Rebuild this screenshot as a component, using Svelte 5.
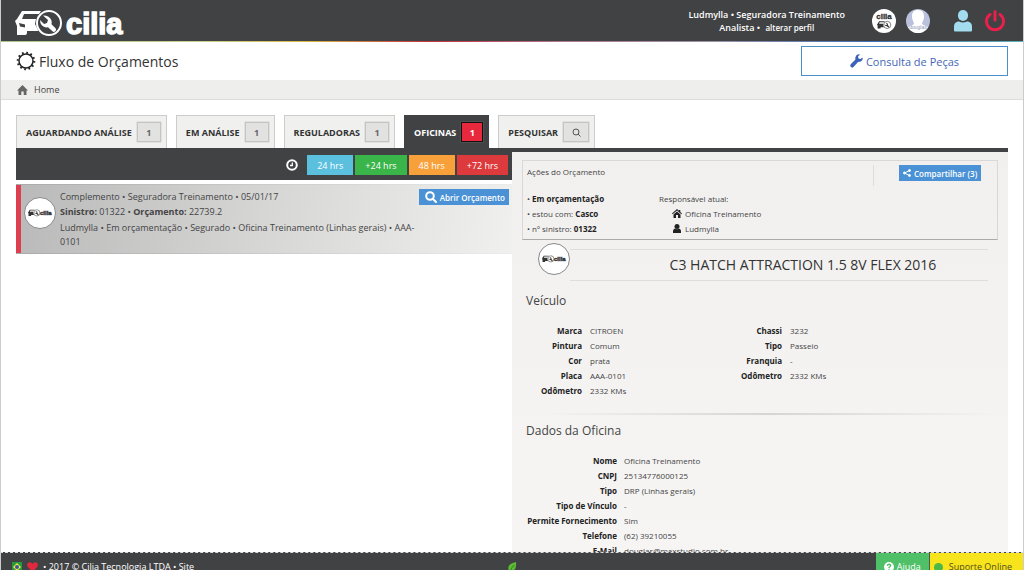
<script lang="ts">
	interface Tab {
		label: string;
		count?: number;
	}

	const tabs: Tab[] = [
		{ label: 'Aguardando análise', count: 1 },
		{ label: 'Em análise', count: 1 },
		{ label: 'Reguladoras', count: 1 },
		{ label: 'Oficinas', count: 1 },
		{ label: 'Pesquisar' }
	];

	const periods = [
		{ label: '24 hrs', tone: 'blue' },
		{ label: '+24 hrs', tone: 'green' },
		{ label: '48 hrs', tone: 'orange' },
		{ label: '+72 hrs', tone: 'red' }
	];

	const vehicleLeft = [
		['Marca', 'CITROEN'],
		['Pintura', 'Comum'],
		['Cor', 'prata'],
		['Placa', 'AAA-0101'],
		['Odômetro', '2332 KMs']
	];

	const vehicleRight = [
		['Chassi', '3232'],
		['Tipo', 'Passeio'],
		['Franquia', '-'],
		['Odômetro', '2332 KMs']
	];

	const workshop = [
		['Nome', 'Oficina Treinamento'],
		['CNPJ', '25134776000125'],
		['Tipo', 'DRP (Linhas gerais)'],
		['Tipo de Vínculo', '-'],
		['Permite Fornecimento', 'Sim'],
		['Telefone', '(62) 39210055'],
		['E-Mail', 'douglas@maxstudio.com.br']
	];

	let active = $state(3);
</script>

{#snippet carMark()}
	<path d="M2 9 7 1h19l-2 3H9L7 9h14l-1 5 3 6v1h-11v2q0 2-2 2H2V16L0 11z" />
	<path class="cut" d="M4 13l6 1.500v3l-5-1z" />
	<circle class="ring" cx="34" cy="13" r="12" />
	<path d="M28 5.500l5 4.500-1 3-3 1-4-4q0 6 6 7.500l2-.2 5 4.500q2 .5 3-1.500.3-1-.5-2l-4-4q1-5-3-7.500-2.500-1.500-5.500-1.300z" />
{/snippet}

{#snippet seal()}
	<svg class="seal" viewBox="0 0 32 32" aria-hidden="true">
		<circle cx="16" cy="16" r="15.5" />
		<g class="mark" transform="translate(4 12.500) scale(0.26)">{@render carMark()}</g>
		<text x="16" y="18">cilia</text>
	</svg>
{/snippet}

{#snippet details(rows: string[][])}
	<dl>
		{#each rows as [term, value]}
			<dt>{term}</dt>
			<dd>{value}</dd>
		{/each}
	</dl>
{/snippet}

<div class="page">
	<header class="topbar">
		<a class="brand" href="#home" aria-label="cilia">
			<svg width="114" height="32" viewBox="0 0 114 32">
				<g class="mark" transform="translate(0 3)">{@render carMark()}</g>
				<text x="51" y="27">cilia</text>
			</svg>
		</a>
		<div class="account">
			<p class="user">
				Ludmylla • Seguradora Treinamento<br />
				Analista • <a href="#perfil">alterar perfil</a>
			</p>
			<a href="#empresa" aria-label="cilia">
				<svg width="24" height="24" viewBox="0 0 24 24">
					<circle cx="12" cy="12" r="12" fill="#fff" />
					<text class="tiny-brand" x="12" y="10">cilia</text>
					<g class="mark dark" transform="translate(5 12) scale(0.3)">{@render carMark()}</g>
				</svg>
			</a>
			<a href="#foto" aria-label="Foto">
				<svg width="24" height="24" viewBox="0 0 24 24">
					<circle cx="12" cy="12" r="12" fill="#b9c1dc" />
					<path d="M12 1c5 0 6 3 6 7 0 3-2 5-2 7 1 1 4 2 6 3-4 8-16 8-20 0 2-1 5-2 6-3 0-2-2-4-2-7 0-4 1-7 6-7z" fill="#fff" />
					<text class="tiny-name" x="12" y="20">douglas</text>
				</svg>
			</a>
			<a class="profile" href="#conta" aria-label="Conta">
				<svg width="18" height="22" viewBox="0 0 18 22" fill="#a3dcee">
					<rect x="4" y="0" width="10" height="11" rx="5" />
					<path d="M1 21.500q-1 0-1-1v-4q0-4 4-5h1q4 2 8 0h1q4 1 4 5v4q0 1-1 1z" />
				</svg>
			</a>
			<a href="#sair" aria-label="Sair">
				<svg width="20" height="22" viewBox="0 0 20 22" fill="none" stroke="#ea1f4c" stroke-width="3" stroke-linecap="round">
					<path d="M5 4.500a8.500 8.500 0 1 0 10 0M10 1.500v8.500" />
				</svg>
			</a>
		</div>
	</header>
	<div class="rainbow"></div>

	<div class="titlebar">
		<svg width="20" height="20" viewBox="0 0 20 20" fill="none" stroke="#222">
			<circle cx="10" cy="10" r="7" stroke-width="1.500" />
			<circle cx="10" cy="10" r="8.300" stroke-width="2" stroke-dasharray="1.700 2.646" />
		</svg>
		<h1>Fluxo de Orçamentos</h1>
		<button class="parts" type="button">
			<svg width="13" height="14" viewBox="0 0 13 14" fill="#3c62b5">
				<path d="M12.500 3.500 10.500 5 8.500 4.500 8 2.500 10 .5Q6.500-.5 5.500 3 5 4.500 5.500 5.500L.7 10.300Q-.3 12 1 13t2.500 0L8 8q4 0 4.700-3z" />
			</svg>
			Consulta de Peças
		</button>
	</div>

	<nav class="breadcrumb">
		<a href="#home">
			<svg width="11" height="10" viewBox="0 0 11 10" fill="#666">
				<path d="M5.500 0 11 5.500H9.500V10H6.700V6.500H4.300V10H1.500V5.500H0z" />
			</svg>
			Home
		</a>
	</nav>

	<main>
		<div class="tabs" role="tablist">
			{#each tabs as tab, i}
				<button type="button" role="tab" aria-selected={active === i} class:active={active === i} onclick={() => (active = i)}>
					{tab.label}
					<span class="badge" class:search={!tab.count}>
						{#if tab.count}
							{tab.count}
						{:else}
							<svg width="9" height="9" viewBox="0 0 9 9" fill="none" stroke="#555">
								<circle cx="4" cy="4" r="3" />
								<path d="M6 6l2.500 2.500" />
							</svg>
						{/if}
					</span>
				</button>
			{/each}
		</div>

		<div class="columns">
			<section>
				<div class="periods">
					<svg width="12" height="12" viewBox="0 0 12 12" fill="none" stroke="#fff">
						<circle cx="6" cy="6" r="4.800" stroke-width="2" />
						<path d="M6.300 3.500v3H4" stroke-width="1.300" />
					</svg>
					{#each periods as period}
						<button type="button" class={period.tone}>{period.label}</button>
					{/each}
				</div>

				<article class="budget">
					{@render seal()}
					<div class="summary">
						<p>Complemento • Seguradora Treinamento • 05/01/17</p>
						<p><b>Sinistro:</b> 01322 • <b>Orçamento:</b> 22739.2</p>
						<p class="trail">Ludmylla • Em orçamentação • Segurado • Oficina Treinamento (Linhas gerais) • AAA-<wbr />0101</p>
					</div>
					<button class="action" type="button">
						<svg width="12" height="12" viewBox="0 0 12 12" fill="none" stroke="#fff" stroke-width="2">
							<circle cx="5" cy="5" r="3.800" />
							<path d="M8 8l3 3" stroke-linecap="round" />
						</svg>
						Abrir Orçamento
					</button>
				</article>
			</section>

			<section class="panel">
				<div class="actions">
					<div class="actions-head">
						<h2>Ações do Orçamento</h2>
						<div class="share">
							<button class="action" type="button">
								<svg width="8" height="8" viewBox="0 0 8 8" fill="#fff" stroke="#fff">
									<path d="M6.500 1.500 1.500 4l5 2.500" fill="none" />
									<circle cx="6.500" cy="1.500" r="1" />
									<circle cx="1.500" cy="4" r="1" />
									<circle cx="6.500" cy="6.500" r="1" />
								</svg>
								Compartilhar (3)
							</button>
						</div>
					</div>
					<div class="actions-body">
						<ul>
							<li>• <b>Em orçamentação</b></li>
							<li>• estou com: <b>Casco</b></li>
							<li>• nº sinistro: <b>01322</b></li>
						</ul>
						<ul>
							<li>Responsável atual:</li>
							<li class="owner">
								<svg width="10" height="9" viewBox="0 0 10 9" fill="#222">
									<path d="M5 0l2 1.800V1h1.300v2L10 4.500l-.6.700L5 1.600.6 5.200 0 4.500zM5 2.500l3.500 3V9H6V6H4v3H1.500V5.500z" />
								</svg>
								Oficina Treinamento
							</li>
							<li class="owner">
								<svg width="10" height="9" viewBox="0 0 10 9" fill="#222">
									<circle cx="5" cy="2.500" r="2.500" />
									<path d="M1 9V7q0-2 2-2.500 2 1.500 4 0 2 .5 2 2.500v2z" />
								</svg>
								Ludmylla
							</li>
						</ul>
					</div>
				</div>

				<div class="model">
					{@render seal()}
					<h2>C3 HATCH ATTRACTION 1.5 8V FLEX 2016</h2>
				</div>

				<h3>Veículo</h3>
				<div class="vehicle">
					{@render details(vehicleLeft)}
					{@render details(vehicleRight)}
				</div>
				<hr />
				<h3>Dados da Oficina</h3>
				<div class="workshop">
					{@render details(workshop)}
				</div>
			</section>
		</div>
	</main>

	<footer>
		<div class="legal">
			<svg width="10" height="10" viewBox="0 0 10 10">
				<rect width="10" height="10" fill="#259b3b" />
				<path d="M5 1l4 4-4 4-4-4z" fill="#f4e04a" />
				<circle cx="5" cy="5" r="2" fill="#3659a5" />
			</svg>
			<svg width="11" height="10" viewBox="0 0 11 10" fill="#e0293f">
				<path d="M5.500 10 .8 5Q-.8 2 1.500.6 4-.5 5.500 2 7-.5 9.500.6q2.300 1.400.7 4.400z" />
			</svg>
			<span>• 2017 © Cilia Tecnologia LTDA • <a href="#site">Site</a></span>
		</div>
		<svg class="leaf" width="10" height="12" viewBox="0 0 10 12">
			<path d="M9 0q1 9-6 10l-1 2-1-1 1-2Q-1 2 9 0z" fill="#5cba33" />
			<path d="M7 3 2 10" stroke="#2f8a20" fill="none" />
		</svg>
		<div class="support">
			<a class="help" href="#ajuda">
				<svg width="10" height="10" viewBox="0 0 11 11" fill="none">
					<circle cx="5.500" cy="5.500" r="5.500" fill="#fff" />
					<path d="M3.700 4.200q.2-1.700 1.900-1.700 1.700.1 1.700 1.500 0 .8-1.700 1.800V7M5.500 8v1.500" stroke="#4fbf68" stroke-width="1.500" />
				</svg>
				Ajuda
			</a>
			<a class="online" href="#suporte"><i></i>Suporte Online</a>
		</div>
	</footer>
</div>

<style>
	:global(body) {
		margin: 0;
	}

	.page {
		height: 100vh;
		box-sizing: border-box;
		display: flex;
		flex-direction: column;
		overflow: hidden;
		background: #fff;
		color: #444;
		font-family: 'Open Sans', sans-serif;
		font-size: 9px;
		border: solid #ccc;
		border-width: 0 1px;
	}

	h1,
	h2,
	h3,
	p,
	ul,
	dl,
	dd {
		margin: 0;
		padding: 0;
		font-weight: 400;
		list-style: none;
	}

	a {
		color: inherit;
		text-decoration: none;
	}

	button {
		font: inherit;
		border: 0;
		padding: 0;
		cursor: pointer;
	}

	svg {
		display: block;
		flex-shrink: 0;
	}

	.mark {
		fill: #fff;
	}

	.mark :global(.cut) {
		fill: #414244;
	}

	.mark :global(.ring) {
		fill: #414244;
		stroke: #fff;
		stroke-width: 2;
	}

	.topbar {
		display: flex;
		align-items: center;
		justify-content: space-between;
		height: 41px;
		flex-shrink: 0;
		margin: 0 -1px;
		padding: 0 19px 0 15px;
		background: #414244;
		color: #fff;
	}

	.rainbow {
		height: 1px;
		flex-shrink: 0;
		background: linear-gradient(90deg, #a9c48a, #c9cf8a 20%, #d8b84a 30%, #c8303c 42%, #b07a90 55%, #9a94a8 70%, #3f6fb5 85%, #5fb0b5);
	}

	.brand {
		margin-top: 4px;
	}

	.brand text {
		fill: #fff;
		stroke: #fff;
		stroke-width: 1.5;
		font: 700 29px 'Liberation Sans', sans-serif;
	}

	.account {
		display: flex;
		align-items: center;
		gap: 10px;
	}

	.user {
		margin-right: 17px;
		text-align: center;
		line-height: 13px;
		font-weight: 600;
	}

	.user a {
		font-size: 8px;
	}

	.profile {
		margin-left: 14px;
	}

	.account a:last-child {
		margin-left: 3px;
	}

	.tiny-brand {
		fill: #333;
		stroke: #333;
		stroke-width: 0.3;
		font: 700 8px 'Liberation Sans', sans-serif;
		text-anchor: middle;
	}

	.tiny-name {
		fill: #8b95b5;
		font: 5px 'Liberation Sans', sans-serif;
		text-anchor: middle;
	}

	.mark.dark,
	.seal .mark {
		fill: #333;
	}

	.mark.dark :global(.ring),
	.seal .mark :global(.ring) {
		fill: #fff;
		stroke: #333;
	}

	.titlebar {
		display: flex;
		align-items: center;
		gap: 3px;
		height: 38px;
		flex-shrink: 0;
		padding: 0 15px;
	}

	.titlebar h1 {
		flex: 1;
		font-size: 14px;
		color: #333;
	}

	.parts {
		display: flex;
		align-items: center;
		justify-content: center;
		gap: 3px;
		width: 207px;
		height: 30px;
		background: #fff;
		border: 1px solid #4a8fc7;
		color: #4467b5;
		font-size: 11px;
	}

	.breadcrumb {
		display: flex;
		align-items: center;
		height: 19px;
		flex-shrink: 0;
		padding: 0 16px;
		background: #eeeeec;
		border-bottom: 1px solid #ddd;
	}

	.breadcrumb a {
		display: flex;
		align-items: center;
		gap: 6px;
	}

	main {
		flex: 1;
		min-height: 0;
		display: flex;
		flex-direction: column;
		padding: 15px 15px 0;
		overflow: hidden;
	}

	.tabs {
		display: flex;
		gap: 9px;
		border-bottom: 4px solid #414244;
	}

	.tabs button {
		display: flex;
		align-items: center;
		gap: 5px;
		height: 33px;
		box-sizing: border-box;
		padding: 0 5px 0 9px;
		background: #f0f0ee;
		border: 1px solid #ccc;
		border-bottom: 0;
		color: #333;
		font-weight: 700;
		text-transform: uppercase;
	}

	.badge {
		display: flex;
		align-items: center;
		justify-content: center;
		width: 22px;
		height: 18px;
		background: #e2e2e1;
		border: 1px solid #c4c4c4;
		box-shadow: 0 0 1px #999;
		color: #666;
	}

	.badge.search {
		width: 24px;
	}

	.tabs .active {
		background: #414244;
		border-color: #414244;
		color: #fff;
	}

	.active .badge {
		width: 20px;
		background: #e8283d;
		border-color: #111;
		color: #fff;
	}

	.columns {
		flex: 1;
		min-height: 0;
		display: grid;
		grid-template-columns: 1fr 1fr;
	}

	.periods {
		display: flex;
		align-items: center;
		justify-content: flex-end;
		gap: 2px;
		height: 26px;
		padding: 0 4px 2px 0;
		background: #414244;
		color: #fff;
	}

	.periods svg {
		margin-right: 7px;
	}

	.periods button {
		height: 20px;
		padding: 0 10px;
		color: #fff;
	}

	.blue {
		background: #5bc0de;
	}

	.green {
		background: #39b54a;
	}

	.orange {
		background: #f8a13a;
	}

	.red {
		background: #dc3a3c;
	}

	.budget {
		display: flex;
		align-items: flex-start;
		margin-top: 4px;
		padding: 4px 3px;
		background: linear-gradient(100deg, #b9b9b9, #d6d6d5 50%, #f0f0ef);
		border: solid #bbb;
		border-width: 1px 0;
		border-image: linear-gradient(90deg, #aaa, #ececec) 1;
		box-shadow: inset 5px 0 #dd3e50;
	}

	.seal {
		width: 32px;
		height: 32px;
	}

	.seal circle {
		fill: #fff;
		stroke: #888;
	}

	.seal text {
		fill: #333;
		stroke: #333;
		stroke-width: 0.4;
		font: 700 6px 'Liberation Sans', sans-serif;
	}

	.budget .seal {
		margin: 8px 4px 0 5px;
	}

	.summary {
		flex: 1;
		line-height: 15px;
	}

	.trail {
		padding-top: 2px;
		line-height: 14px;
	}

	.action {
		display: flex;
		align-items: center;
		gap: 3px;
		height: 16px;
		padding: 0 4px;
		background: #4a92d5;
		color: #fff;
		font-size: 8px;
		font-weight: 600;
		white-space: nowrap;
	}

	.budget .action {
		padding-left: 6px;
	}

	.panel {
		padding: 8px 10px 0;
		background: linear-gradient(#f1f0ef, #f6f5f4);
		overflow: hidden;
		font-size: 8px;
	}

	.actions {
		padding: 4px 4px 3px;
		border: 1px solid #d8d8d7;
		border-bottom-color: #aaa;
	}

	.actions-head {
		display: grid;
		grid-template-columns: 1fr 120px;
		height: 26px;
	}

	.actions-head h2 {
		font-size: 8px;
		line-height: 13px;
	}

	.share {
		height: 21px;
		display: flex;
		align-items: flex-start;
		padding-left: 25px;
		border-left: 1px solid #ddd;
	}

	.actions-body {
		display: grid;
		grid-template-columns: 132px 1fr;
		line-height: 15px;
	}

	.actions-body b,
	dt {
		color: #222;
	}

	.owner {
		display: flex;
		align-items: center;
		gap: 3px;
		padding-left: 13px;
	}

	.model {
		display: flex;
		align-items: center;
		margin: 3px 10px 0 16px;
		height: 38px;
	}

	.model .seal {
		align-self: flex-start;
	}

	.model h2 {
		flex: 1;
		align-self: flex-end;
		height: 30px;
		line-height: 30px;
		padding-left: 48px;
		border: solid #ddd;
		border-width: 1px 0;
		text-align: center;
		font-size: 14px;
		color: #333;
	}

	h3 {
		padding-left: 4px;
		font-size: 12px;
		line-height: 16px;
	}

	.model + h3 {
		margin-top: 12px;
	}

	.vehicle {
		display: grid;
		grid-template-columns: 200px 1fr;
		align-items: start;
		margin-top: 14px;
	}

	dl {
		display: grid;
		grid-template-columns: 60px 1fr;
		column-gap: 8px;
		line-height: 15px;
	}

	dt {
		text-align: right;
		font-weight: 700;
	}

	hr {
		height: 2px;
		margin: 15px 0 8px 20px;
		border: 0;
		background: linear-gradient(90deg, transparent, #d5d5d5 50%, transparent);
	}

	.workshop {
		margin-top: 14px;
	}

	.workshop dl {
		grid-template-columns: 95px 1fr;
		column-gap: 7px;
	}

	footer {
		display: grid;
		grid-template-columns: 1fr auto 1fr;
		align-items: start;
		height: 17px;
		flex-shrink: 0;
		margin: 0 -1px;
		overflow: hidden;
		background: #414244;
		border-top: 1px dashed #ddd;
		color: #fff;
		line-height: 28px;
	}

	.legal {
		display: flex;
		align-items: center;
		gap: 5px;
		padding-left: 12px;
	}

	.leaf {
		margin-top: 9px;
	}

	.support {
		display: flex;
		justify-content: flex-end;
	}

	.help,
	.online {
		display: flex;
		align-items: center;
		gap: 3px;
		padding: 0 8px;
		background: #4fbf68;
	}

	.online {
		gap: 6px;
		padding: 0 12px 0 4px;
		background: #f7e41c;
		border-left: 1px solid #555;
		color: #554f20;
	}

	.online i {
		width: 9px;
		height: 9px;
		border-radius: 50%;
		background: #4cb848;
	}
</style>
